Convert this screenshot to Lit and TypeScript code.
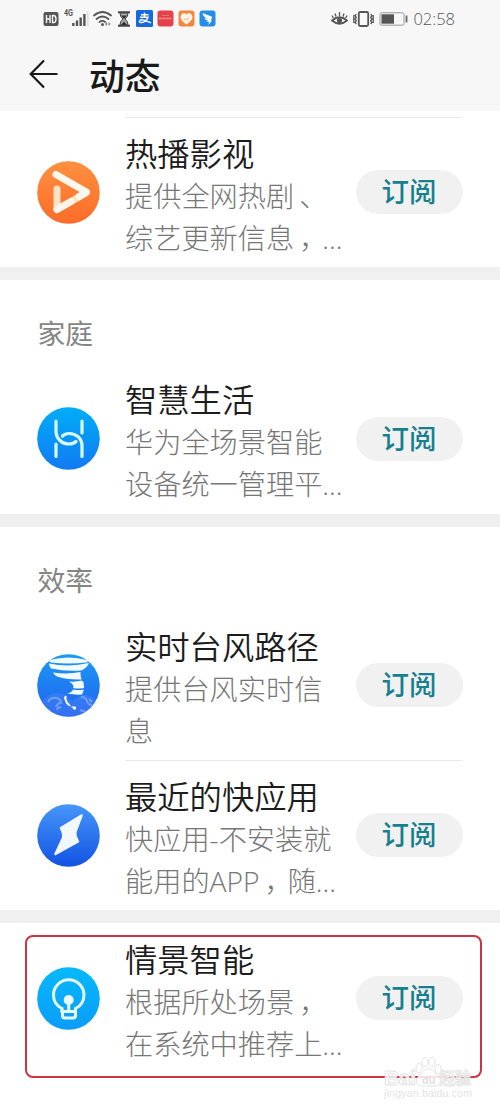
import { LitElement, html, svg, css } from "lit";
import { customElement, property } from "lit/decorators.js";

type IconName = "video" | "home" | "typhoon" | "bolt" | "bulb";

interface Service {
  icon: IconName;
  name: string;
  lines: string[];
}

interface Group {
  label?: string;
  services: Service[];
}

const GROUPS: Group[] = [
  { services: [{ icon: "video", name: "热播影视", lines: ["提供全网热剧、", "综艺更新信息，..."] }] },
  { label: "家庭", services: [{ icon: "home", name: "智慧生活", lines: ["华为全场景智能", "设备统一管理平..."] }] },
  {
    label: "效率",
    services: [
      { icon: "typhoon", name: "实时台风路径", lines: ["提供台风实时信", "息"] },
      { icon: "bolt", name: "最近的快应用", lines: ["快应用-不安装就", "能用的APP，随..."] },
    ],
  },
  { services: [{ icon: "bulb", name: "情景智能", lines: ["根据所处场景，", "在系统中推荐上..."] }] },
];

const COLORS: Record<IconName, [string, string]> = {
  video: ["#ff9040", "#fb6c28"],
  home: ["#00adf8", "#127af4"],
  typhoon: ["#1b9cf3", "#205ff0"],
  bolt: ["#4696f8", "#1253e4"],
  bulb: ["#06b9fb", "#0b9cfb"],
};

const GLYPHS = {
  video: svg`
    <path d="M20 28V48" stroke="#ffe2c6" stroke-width="7" stroke-linecap="round"/>
    <path d="M20 48.500L49 32" stroke="#ffdfbd" stroke-width="7" stroke-linecap="round"/>
    <path d="M20 48.500L34 40.500" stroke="#fff5ea" stroke-width="7" stroke-linecap="round"/>
    <path d="M19 13.500L49.500 31L42 35.500" stroke="#fff8ee" stroke-width="7" stroke-linecap="round" stroke-linejoin="round" fill="none"/>`,
  home: svg`
    <g fill="none" stroke="#d9fbff" stroke-width="3.200" stroke-linecap="round">
      <path d="M19 14V24C19 32 25 37 32 37Q36.500 37 39 34.500"/>
      <path d="M45 49.500V39C45 31 39 26.500 32 26.500Q28 26.500 25.500 29"/>
      <path d="M45 14V26M19 37V49.500"/>
    </g>`,
  typhoon: svg`
    <path d="M5 47Q15 36 27 40L35 47 46 40Q56 42 60 47L60 63H5Z" fill="#5d8df5" opacity=".35"/>
    <path d="M11 48q3-5 8-4t5 5q-4 0-5 4M20 56q1-4 4-2M44 43q5 0 6 4t5 4M43 56l6 2M52 45l3 3" stroke="#9ab9fa" fill="none" stroke-width="2" opacity=".6"/>
    <g fill="#f2fbff">
      <path d="M13 6Q31 1 50 6Q52 8 49 8.500Q32 10.500 14 8.500Q11 7 13 6Z"/>
      <path d="M12 9.500Q32 13.500 52 9Q50 14 44.500 16.500Q28 17.500 14 14.500Q12 12 12 9.500Z"/>
      <path d="M16 18.500Q31 20.500 43.500 18Q43 21 44.500 25.500Q30 26 20 22.500Q17 20.500 16 18.500Z"/>
      <path d="M32 27.500Q40 28 44.500 26.500L46.500 28L47 34Q41 35 36 34Q38 31 32 27.500Z"/>
      <path d="M36 35.500Q42 36.500 47 35.500L45 40.500Q38 41 30 39.500Q35 38.500 36 35.500Z"/>
    </g>
    <path d="M29 42L28 44L30 49L32 51" stroke="#fff" stroke-width="2" fill="none"/>
    <path d="M32 51L37 54" stroke="#fff" stroke-width="1.500" fill="none" stroke-dasharray="1.500 1.500"/>
    <circle cx="37.500" cy="54" r="1.700" fill="#fff"/>`,
  bolt: svg`
    <path d="M44.500 11.500L24 24Q27 30 26 34L18.500 50L41 37.500Q37.500 31 38.500 27.500Z" fill="#f2f8ff" stroke="#f2f8ff" stroke-width="2.500" stroke-linejoin="round"/>`,
  bulb: svg`
    <g fill="none" stroke="#e9fcff" stroke-width="3">
      <path d="M25 44.500V41.500C19.500 39 16.500 33.500 16.500 28A15.200 15.200 0 0 1 47 28C47 33.500 44 39 38.500 41.500V44.500"/>
      <path d="M23.500 44.500H40M25.500 44V48.500Q25.500 51 28 51H36Q38.500 51 38.500 48.500V44"/>
      <path d="M31.700 34V44"/>
    </g>
    <circle cx="31.700" cy="33" r="5" fill="#e9fcff"/>`,
};

@customElement("service-icon")
class ServiceIcon extends LitElement {
  @property() name: IconName = "video";

  static styles = css`
    :host { display: block; width: 63px; height: 63px; }
    svg { display: block; }
  `;

  render() {
    const [top, bottom] = COLORS[this.name];
    return html`<svg width="63" height="63" viewBox="0 0 63 63">
      <defs>
        <linearGradient id="g" x1="0" y1="0" x2="0" y2="1">
          <stop offset="0" stop-color=${top} /><stop offset="1" stop-color=${bottom} />
        </linearGradient>
        <clipPath id="c"><circle cx="31.5" cy="31.5" r="31.3" /></clipPath>
      </defs>
      <circle cx="31.5" cy="31.5" r="31.3" fill="url(#g)" />
      <g clip-path="url(#c)">${GLYPHS[this.name]}</g>
    </svg>`;
  }
}

@customElement("service-row")
class ServiceRow extends LitElement {
  @property({ attribute: false }) service!: Service;

  static styles = css`
    :host { display: flex; align-items: center; height: 150px; padding: 0 37px; box-sizing: border-box; }
    .text { flex: 1; margin-left: 25px; padding-top: 6px; white-space: nowrap; }
    .name { font-size: 32.3px; line-height: 43px; font-weight: 350; color: #1c1c1c; }
    .desc { font-size: 28.2px; line-height: 42px; font-weight: 300; color: #767676; }
    .mark { display: inline-block; margin: 0 9.1px 0 5px; font-feature-settings: "halt" 1; }
    .subscribe {
      width: 107px; height: 44px; padding: 0; border: 0; border-radius: 22px; background: #f1f1f1;
      color: #16808f; font: inherit; font-size: 27.5px; font-weight: 500; line-height: 44px;
    }
    .caption { display: block; padding-right: 1px; }
  `;

  render() {
    return html`
      <service-icon name=${this.service.icon}></service-icon>
      <div class="text">
        <div class="name">${this.service.name}</div>
        ${this.service.lines.map(
          (line) => html`<div class="desc">${line.split(/([，、])/).map((part) =>
            part === "，" || part === "、" ? html`<span class="mark">${part}</span>` : part
          )}</div>`
        )}
      </div>
      <button class="subscribe"><span class="caption">订阅</span></button>
    `;
  }
}

@customElement("status-bar")
class StatusBar extends LitElement {
  static styles = css`
    :host { display: flex; align-items: center; justify-content: space-between; height: 37px; padding: 0 45px 0 43px; }
    svg { display: block; }
    .side { display: flex; align-items: center; }
    .left { gap: 4px; }
    .network { margin: -2px 0 0 1px; }
    .glass { margin: 0 2px; }
    .right { gap: 5px; }
    .time { font-family: "Open Sans", "Noto Sans", sans-serif; font-weight: 300; font-size: 16.5px; line-height: 37px; color: #555; }
  `;

  render() {
    return html`
      <div class="side left">
        <svg width="16" height="16" viewBox="0 0 16 16">
          <rect x=".5" y="1" width="15" height="14" rx="2" fill="#555" />
          <path d="M3.500 4v8M7 4v8M3.500 8H7M9.500 4.500h1.500q2 .5 2 3.500t-2 3.500H9.500z" stroke="#f7f7f7" stroke-width="1.400" fill="none" />
        </svg>
        <svg class="network" width="25" height="19" viewBox="0 0 25 19">
          <text x="0" y="8" font-family="Roboto, sans-serif" font-size="9" font-weight="700" fill="#555" textLength="9" lengthAdjust="spacingAndGlyphs">4G</text>
          <path d="M9.300 15v3M13 12.500V18M16.700 9.500V18M20.400 6V18" stroke="#555" stroke-width="2.400" />
          <path d="M23.800 3V18" stroke="#ddd" stroke-width="1.500" />
        </svg>
        <svg class="wifi" width="19" height="17" viewBox="0 0 19 17">
          <g fill="none" stroke="#555" stroke-width="1.800" stroke-linecap="round">
            <path d="M1 5.500Q9.500-1.500 18 5.500M3.500 9Q9.500 4 15.500 9M6.500 12Q9.500 9.800 12 12" />
          </g>
          <circle cx="9.500" cy="14.500" r="1.500" fill="#555" />
          <path d="M12 14l2-2v4zM17.500 14l-2-2v4z" fill="#777" />
        </svg>
        <svg class="glass" width="12" height="16" viewBox="0 0 12 16">
          <path d="M0 1.200h12M0 14.800h12" stroke="#444" stroke-width="2" />
          <path d="M2 2h8q0 4-3 6q3 2 3 6H2q0-4 3-6Q2 6 2 2z" fill="#aaa" stroke="#444" />
          <path d="M3 4.500h6L6 8zM3 14l3-3.500L9 14z" fill="#333" />
        </svg>
        <svg width="17" height="17" viewBox="0 0 17 17">
          <rect width="17" height="17" rx="1.500" fill="#1769df" />
          <path d="M5 4.800h7.500M8.500 2.500v5M4 7.300h8Q10 12.500 5.500 12.500Q3 12.500 3.500 11Q4.500 9 8 10.200L15 12.800" fill="none" stroke="#fff" stroke-width="1.400" />
        </svg>
        <svg width="17" height="17" viewBox="0 0 17 17">
          <rect x=".5" y=".5" width="16" height="16" rx="3" fill="#e4424a" />
          <path d="M2 8.500h13" stroke="#f49a9d" stroke-width="1.700" stroke-dasharray="2 .6" />
          <path d="M5 5.500h7" stroke="#eb7175" />
        </svg>
        <svg width="17" height="17" viewBox="0 0 17 17">
          <rect x=".5" y=".5" width="16" height="16" rx="3" fill="#f3873c" />
          <path d="M8.500 14.500Q-.5 8 4 4Q6.500 2 8.500 4.500Q10.500 2 13 4Q17.500 8 8.500 14.500z" fill="#fff4e8" />
          <path d="M6 8.500q2.500 3 5-1" stroke="#f3b27a" fill="none" />
        </svg>
        <svg width="17" height="17" viewBox="0 0 17 17">
          <rect x=".5" y=".5" width="16" height="16" rx="3" fill="#248de4" />
          <path d="M3.500 3L12.500 6.500Q13.500 7 12.800 8.500L11.500 10.500H13L9.500 15L10 12L7.500 11.500L9 10.500Q6 10 5.500 8.200L8 8.500Q4 6.500 3.500 3z" fill="#fff" />
        </svg>
      </div>
      <div class="side right">
        <svg width="17" height="16" viewBox="0 0 17 16">
          <path d="M1 9.500Q8.500 3 16 9.500Q8.500 16 1 9.500z" fill="none" stroke="#555" stroke-width="1.700" />
          <circle cx="8.500" cy="9.500" r="2.600" fill="#555" />
          <path d="M8.500 1v4M4 2.500l1 3M13 2.500l-1 3M.8 4.500l1.700 2.500M16.200 4.500l-1.700 2.500" stroke="#555" stroke-width="1.300" />
        </svg>
        <svg width="21" height="16" viewBox="0 0 21 16">
          <rect x="5.800" y="1" width="9.400" height="14" rx="1.500" fill="none" stroke="#555" stroke-width="1.800" />
          <path d="M3.300 3l-1.200 1.700 1.200 1.700-1.200 1.700 1.200 1.700-1.200 1.700 1.200 1.500M.8 4v8M17.700 3l1.200 1.700-1.200 1.700 1.200 1.700-1.200 1.700 1.200 1.700-1.200 1.500M20.200 4v8" fill="none" stroke="#555" stroke-width="1.300" />
        </svg>
        <svg width="29" height="14" viewBox="0 0 29 14">
          <rect x="1" y=".8" width="24" height="12.400" rx="1.500" fill="none" stroke="#999" />
          <rect x="2.500" y="2.300" width="12.500" height="9.400" fill="#555" />
          <path d="M27.500 3.500v7" stroke="#666" stroke-width="1.800" />
        </svg>
        <span class="time">02:58</span>
      </div>
    `;
  }
}

@customElement("app-root")
class AppRoot extends LitElement {
  static styles = css`
    :host {
      display: block; position: relative; width: 500px; height: 1111px; overflow: hidden; background: #fff;
      font-family: "Open Sans", "Noto Sans CJK SC", sans-serif;
    }
    header { height: 111px; background: #f7f7f7; }
    .bar { display: flex; align-items: center; height: 74px; padding-left: 29px; box-sizing: border-box; }
    .bar svg { display: block; margin-bottom: 1px; }
    h1 { margin: 0 0 0 30px; font-size: 35.8px; line-height: 48px; padding-top: 3px; font-weight: 500; color: #191919; }
    .group + .group { border-top: 13px solid #f0f0f0; }
    .group:first-child { padding-top: 6px; }
    .label { height: 83.5px; padding: 32px 37.5px 0; box-sizing: border-box; font-size: 27.8px; line-height: 42px; color: #858585; }
    .rule { height: 1px; margin: 0 38px -1px 125px; background: #eaeaea; }
    .highlight {
      position: absolute; left: 25px; top: 935px; width: 457px; height: 143px; box-sizing: border-box;
      border: 2px solid #cb3542; border-radius: 8px;
    }
    .watermark { position: absolute; left: 382px; top: 1056px; }
  `;

  render() {
    return html`
      <header>
        <status-bar></status-bar>
        <div class="bar">
          <svg width="30" height="30" viewBox="0 0 30 30">
            <path d="M28.500 15H2M15 1.500L1.700 15L15 28.500" fill="none" stroke="#191919" stroke-width="2.200" />
          </svg>
          <h1>动态</h1>
        </div>
      </header>
      <main>
        ${GROUPS.map(
          (group, g) => html`<section class="group">
            ${group.label ? html`<div class="label">${group.label}</div>` : ""}
            ${group.services.map(
              (service, i) => html`
                ${i > 0 || g === 0 ? html`<div class="rule"></div>` : ""}
                <service-row .service=${service}></service-row>
              `
            )}
          </section>`
        )}
      </main>
      <div class="highlight"></div>
      <svg class="watermark" width="96" height="46" viewBox="0 0 96 46">
        <g fill="#fff" fill-opacity=".85" stroke="#e4e4e4" stroke-width="1">
          <text x="2" y="29" font-family="Liberation Sans, sans-serif" font-size="21" font-weight="700" textLength="32">Bai</text>
          <text x="57" y="28" font-family="Noto Sans CJK SC, sans-serif" font-size="16" font-weight="700" textLength="32">经验</text>
          <ellipse cx="37" cy="12" rx="3" ry="4.500" /><ellipse cx="43" cy="6" rx="3" ry="4.500" />
          <ellipse cx="50" cy="6" rx="3" ry="4.500" /><ellipse cx="56" cy="13" rx="3" ry="4.500" />
          <path d="M46.500 13C41 13 41 18 37 20C32 24 35 30 40 30H53C59 30 61 24 56 20C52 17 52 13 46.500 13z" />
        </g>
        <text x="40" y="28" font-family="Liberation Sans, sans-serif" font-size="11" font-weight="700" fill="#e0e0e0">du</text>
        <text x="2" y="41" font-family="Liberation Sans, sans-serif" font-size="10.500" fill="#e3e3e3" textLength="88">jingyan.baidu.com</text>
      </svg>
    `;
  }
}
